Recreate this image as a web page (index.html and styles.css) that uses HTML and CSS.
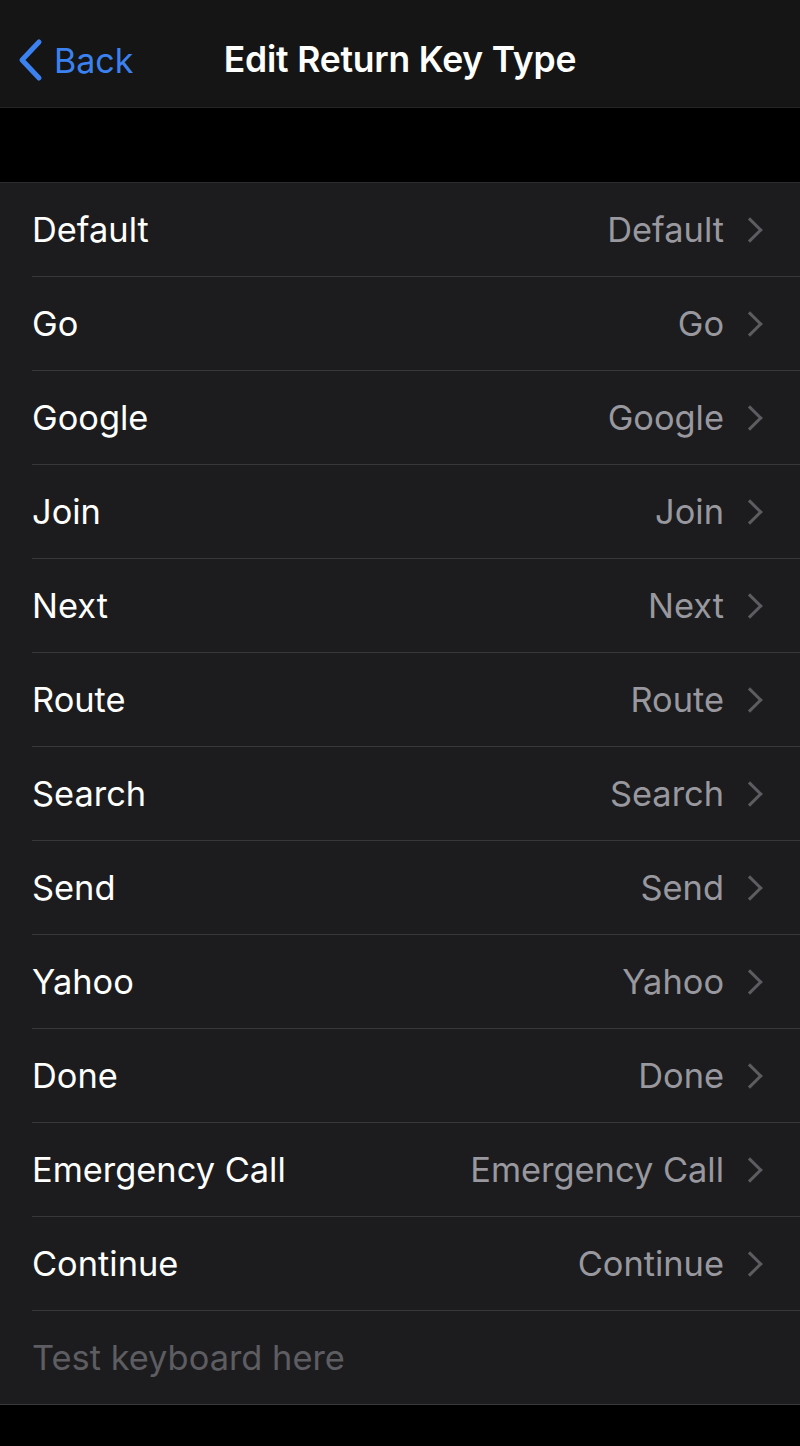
FILE: index.html
```html
<!DOCTYPE html>
<html lang="en">
<head>
    <meta charset="UTF-8">
    <meta name="viewport" content="width=device-width, initial-scale=1.0">
    <title>Edit Return Key Type</title>
    <link rel="stylesheet" href="styles.css">
</head>
<body>

<div class="nav-bar">
    <div class="back">
        <svg class="back-chevron" width="28" height="44" viewBox="0 0 28 44">
            <path d="M23 4 L6 22 L23 40" fill="none" stroke="#3b82f0" stroke-width="5" stroke-linecap="round" stroke-linejoin="round"/>
        </svg>
        <span>Back</span>
    </div>
    <div class="title">Edit Return Key Type</div>
</div>

<div class="spacer"></div>

<div class="list">
    <div class="row"><span class="label">Default</span><span class="value">Default</span><span class="chevron"></span></div>
    <div class="row"><span class="label">Go</span><span class="value">Go</span><span class="chevron"></span></div>
    <div class="row"><span class="label">Google</span><span class="value">Google</span><span class="chevron"></span></div>
    <div class="row"><span class="label">Join</span><span class="value">Join</span><span class="chevron"></span></div>
    <div class="row"><span class="label">Next</span><span class="value">Next</span><span class="chevron"></span></div>
    <div class="row"><span class="label">Route</span><span class="value">Route</span><span class="chevron"></span></div>
    <div class="row"><span class="label">Search</span><span class="value">Search</span><span class="chevron"></span></div>
    <div class="row"><span class="label">Send</span><span class="value">Send</span><span class="chevron"></span></div>
    <div class="row"><span class="label">Yahoo</span><span class="value">Yahoo</span><span class="chevron"></span></div>
    <div class="row"><span class="label">Done</span><span class="value">Done</span><span class="chevron"></span></div>
    <div class="row"><span class="label">Emergency Call</span><span class="value">Emergency Call</span><span class="chevron"></span></div>
    <div class="row"><span class="label">Continue</span><span class="value">Continue</span><span class="chevron"></span></div>
    <div class="row last">
        <input class="test-field" type="text" placeholder="Test keyboard here">
    </div>
</div>

</body>
</html>
```

FILE: styles.css
```css
body {
    font-family: Inter, "Noto Sans", sans-serif;
    background-color: #000;
    margin: 0;
    padding: 0;
    color: #fff;
}
.nav-bar {
    height: 107px;
    background-color: #151515;
    border-bottom: 1px solid #262626;
    display: flex;
    align-items: center;
    justify-content: center;
    position: relative;
}
.back {
    position: absolute;
    left: 16px;
    top: 38px;
    display: flex;
    align-items: center;
    gap: 10px;
    color: #3b82f0;
    font-size: 34px;
}
.title {
    font-size: 35.5px;
    font-weight: 600;
    letter-spacing: -0.2px;
    padding-top: 12px;
}
.spacer {
    height: 74px;
    background-color: #000;
}
.list {
    background-color: #1c1c1e;
    border-top: 1px solid #2c2c2e;
    border-bottom: 1px solid #3a3a3c;
    padding-left: 32px;
}
.row {
    height: 93px;
    border-bottom: 1px solid #38383a;
    display: flex;
    align-items: center;
    padding-right: 41px;
    font-size: 34.4px;
}
.row.last {
    border-bottom: none;
}
.label {
    flex-grow: 1; /* push value to the right */
}
.value {
    color: #98989e;
    margin-right: 1px;
}
.chevron {
    width: 15px;
    height: 15px;
    border-top: 3.5px solid #5c5c61;
    border-right: 3.5px solid #5c5c61;
    transform: rotate(45deg);
    margin-left: 16px;
}
.test-field {
    background: none;
    border: none;
    outline: none;
    padding: 0;
    width: 100%;
    font-family: inherit;
    font-size: 34.4px;
    color: #fff;
}
.test-field::placeholder {
    color: #5d5d62;
}
```
